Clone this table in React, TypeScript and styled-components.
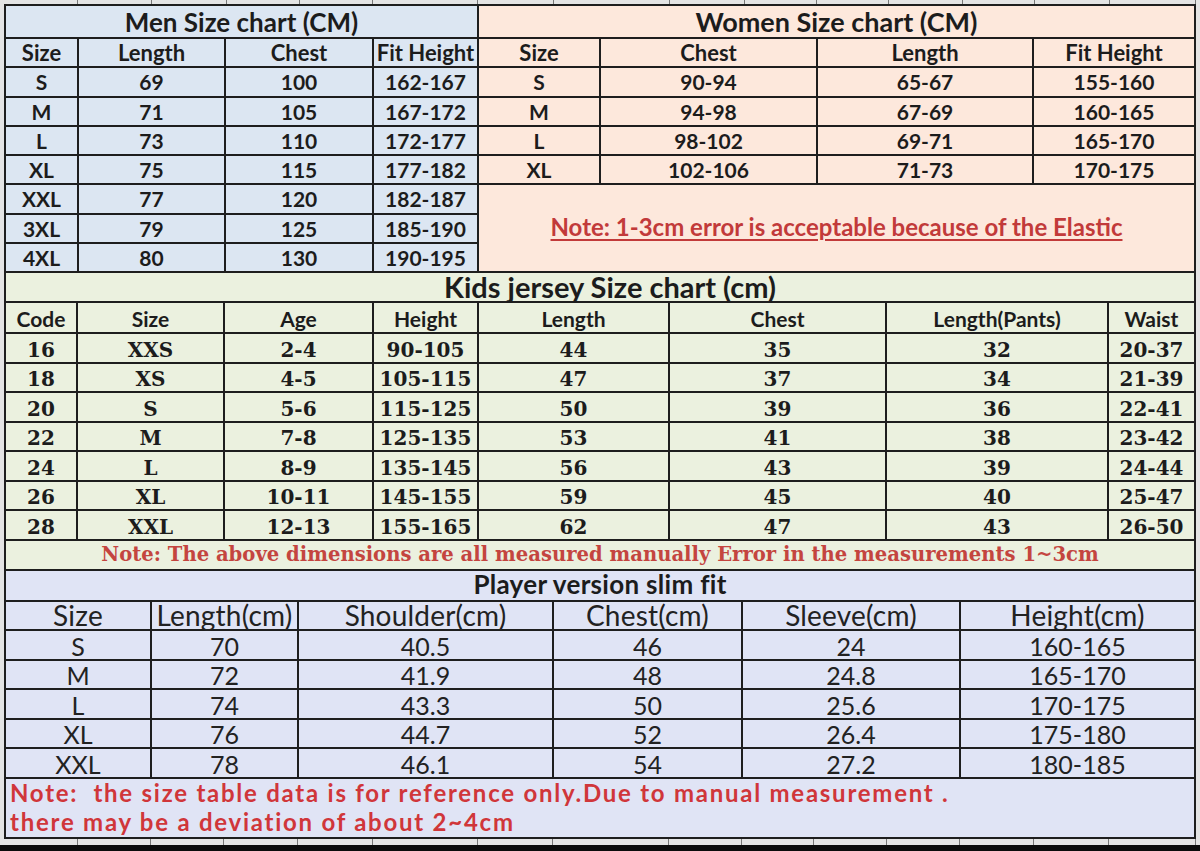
import React from "react";
import styled, { createGlobalStyle } from "styled-components";

type Tone = "men" | "women" | "kids" | "player";

const tones: Record<Tone, string> = {
  men: "#dce6f2",
  women: "#fde8dc",
  kids: "#ebf1df",
  player: "#e0e4f5",
};

const GlobalStyle = createGlobalStyle`
  html, body {
    margin: 0;
    padding: 0;
  }
  body {
    background: #e4e4e4;
    color: #1c1c1c;
    font-family: Lato, "Liberation Sans", sans-serif;
  }
`;

const Page = styled.div`
  width: 1200px;
  height: 851px;
  overflow: hidden;
  display: flex;
  flex-direction: column;
  background: #e4e4e4;
`;

const Ruler = styled.div<{ $h: number }>`
  flex: none;
  height: ${(p) => p.$h}px;
  display: flex;
`;

const Tick = styled.div<{ $w: number }>`
  flex: none;
  width: ${(p) => p.$w}px;
  box-sizing: border-box;
  border-right: 1px solid #777;
`;

const Base = styled.div`
  flex: 1;
  background: #0b0b0b;
`;

const Sheet = styled.div`
  flex: none;
  width: 1188px;
  margin-left: 4px;
  display: grid;
  grid-template-rows: 265px 296px 266px;
  gap: 2px;
  background: #1e1e1e;
  border: 2px solid #1e1e1e;
`;

const Top = styled.div`
  display: grid;
  grid-template-columns: 471px 715px;
  gap: 2px;
`;

const Table = styled.div<{ $cols: string; $rows: string }>`
  display: grid;
  grid-template-columns: ${(p) => p.$cols};
  grid-template-rows: ${(p) => p.$rows};
  gap: 2px;
`;

const Cell = styled.div<{ $tone: Tone }>`
  background: ${(p) => tones[p.$tone]};
  display: flex;
  align-items: flex-end;
  justify-content: center;
  padding-bottom: 2px;
  box-sizing: border-box;
  font-size: 21px;
  font-weight: 700;
  line-height: 1.1;
  white-space: nowrap;
`;

const Title = styled(Cell)`
  grid-column: 1 / -1;
  padding-bottom: 0;
  font-size: 26px;
`;

const WomenTitle = styled(Title)`
  font-size: 27px;
`;

const KidsTitle = styled(Title)`
  font-size: 29px;
  padding-left: 20px;
  line-height: 1;
`;

const PlayerTitle = styled(Title)`
  font-size: 26px;
  letter-spacing: 0.3px;
  padding-bottom: 1px;
`;

const Head = styled(Cell)`
  font-size: 22px;
  padding-bottom: 1px;
`;

const KidsHead = styled(Cell)`
  font-size: 21px;
  padding-bottom: 2px;
`;

const SerifCell = styled(Cell)`
  font-family: "DejaVu Serif", "Liberation Serif", serif;
  font-size: 20px;
  padding-bottom: 1px;
`;

const PlayerCell = styled(Cell)`
  font-weight: 400;
  font-size: 25px;
  line-height: 1;
  padding-bottom: 0;
  color: #222;
`;

const PlayerHead = styled(PlayerCell)`
  font-size: 28px;
  letter-spacing: 0.2px;
`;

const WomenNote = styled(Cell)`
  grid-column: 1 / -1;
  grid-row: 7 / 10;
  align-items: center;
  padding: 0 0 2px;
  font-size: 24px;
  color: #c23a3a;
  span {
    text-decoration: underline;
    text-decoration-thickness: 2px;
    text-underline-offset: 3px;
  }
`;

const KidsNote = styled(SerifCell)`
  grid-column: 1 / -1;
  font-size: 19.6px;
  color: #c4453f;
  padding-bottom: 3px;
`;

const PlayerNote = styled(Cell)`
  grid-column: 1 / -1;
  flex-direction: column;
  align-items: flex-start;
  justify-content: flex-end;
  padding: 0 0 0 4px;
  font-size: 24px;
  letter-spacing: 1.75px;
  line-height: 28.9px;
  color: #d0363a;
  white-space: pre;
`;

const topTicks = [78, 152, 227, 300, 373, 478, 554, 670, 745, 817, 889, 963, 1035, 1110, 1196];
const bottomTicks = [78, 151, 224, 298, 373, 478, 553, 669, 742, 814, 887, 960, 1034, 1109, 1196];

const men = [
  ["S", "69", "100", "162-167"],
  ["M", "71", "105", "167-172"],
  ["L", "73", "110", "172-177"],
  ["XL", "75", "115", "177-182"],
  ["XXL", "77", "120", "182-187"],
  ["3XL", "79", "125", "185-190"],
  ["4XL", "80", "130", "190-195"],
];

const women = [
  ["S", "90-94", "65-67", "155-160"],
  ["M", "94-98", "67-69", "160-165"],
  ["L", "98-102", "69-71", "165-170"],
  ["XL", "102-106", "71-73", "170-175"],
];

const kids = [
  ["16", "XXS", "2-4", "90-105", "44", "35", "32", "20-37"],
  ["18", "XS", "4-5", "105-115", "47", "37", "34", "21-39"],
  ["20", "S", "5-6", "115-125", "50", "39", "36", "22-41"],
  ["22", "M", "7-8", "125-135", "53", "41", "38", "23-42"],
  ["24", "L", "8-9", "135-145", "56", "43", "39", "24-44"],
  ["26", "XL", "10-11", "145-155", "59", "45", "40", "25-47"],
  ["28", "XXL", "12-13", "155-165", "62", "47", "43", "26-50"],
];

const player = [
  ["S", "70", "40.5", "46", "24", "160-165"],
  ["M", "72", "41.9", "48", "24.8", "165-170"],
  ["L", "74", "43.3", "50", "25.6", "170-175"],
  ["XL", "76", "44.7", "52", "26.4", "175-180"],
  ["XXL", "78", "46.1", "54", "27.2", "180-185"],
];

const RulerLine = ({ ticks, h }: { ticks: number[]; h: number }) => (
  <Ruler $h={h}>
    {ticks.map((t, i) => (
      <Tick key={t} $w={t - (i === 0 ? 0 : ticks[i - 1])} />
    ))}
  </Ruler>
);

const App = () => {
  return (
    <>
      <GlobalStyle />
      <Page>
        <RulerLine ticks={topTicks} h={4} />
        <Sheet>
          <Top>
            <Table $cols="71px 145px 146px 103px" $rows="31px repeat(8, 1fr)">
              <Title $tone="men">Men Size chart (CM)</Title>
              {["Size", "Length", "Chest", "Fit Height"].map((h) => (
                <Head key={h} $tone="men">{h}</Head>
              ))}
              {men.map((row) =>
                row.map((v, i) => (
                  <Cell key={row[0] + i} $tone="men">{v}</Cell>
                ))
              )}
            </Table>
            <Table $cols="120px 215px 214px 160px" $rows="31px repeat(8, 1fr)">
              <WomenTitle $tone="women">Women Size chart (CM)</WomenTitle>
              {["Size", "Chest", "Length", "Fit Height"].map((h) => (
                <Head key={h} $tone="women">{h}</Head>
              ))}
              {women.map((row) =>
                row.map((v, i) => (
                  <Cell key={row[0] + i} $tone="women">{v}</Cell>
                ))
              )}
              <WomenNote $tone="women">
                <span>Note: 1-3cm error is acceptable because of the Elastic</span>
              </WomenNote>
            </Table>
          </Top>

          <Table
            $cols="70px 145px 147px 103px 189px 215px 220px 85px"
            $rows="28px 29px repeat(7, 1fr) 28px"
          >
            <KidsTitle $tone="kids">Kids jersey Size chart (cm)</KidsTitle>
            {["Code", "Size", "Age", "Height", "Length", "Chest", "Length(Pants)", "Waist"].map((h) => (
              <KidsHead key={h} $tone="kids">{h}</KidsHead>
            ))}
            {kids.map((row) =>
              row.map((v, i) => (
                <SerifCell key={row[0] + i} $tone="kids">{v}</SerifCell>
              ))
            )}
            <KidsNote $tone="kids">
              Note: The above dimensions are all measured manually Error in the measurements 1~3cm
            </KidsNote>
          </Table>

          <Table
            $cols="144px 145px 253px 187px 216px 233px"
            $rows="29px 27px repeat(5, 1fr) 58px"
          >
            <PlayerTitle $tone="player">Player version slim fit</PlayerTitle>
            {["Size", "Length(cm)", "Shoulder(cm)", "Chest(cm)", "Sleeve(cm)", "Height(cm)"].map((h) => (
              <PlayerHead key={h} $tone="player">{h}</PlayerHead>
            ))}
            {player.map((row) =>
              row.map((v, i) => (
                <PlayerCell key={row[0] + i} $tone="player">{v}</PlayerCell>
              ))
            )}
            <PlayerNote $tone="player">
              <div>Note:  the size table data is for reference only.Due to manual measurement .</div>
              <div>there may be a deviation of about 2~4cm</div>
            </PlayerNote>
          </Table>
        </Sheet>
        <RulerLine ticks={bottomTicks} h={6} />
        <Base />
      </Page>
    </>
  );
};

export default App;
